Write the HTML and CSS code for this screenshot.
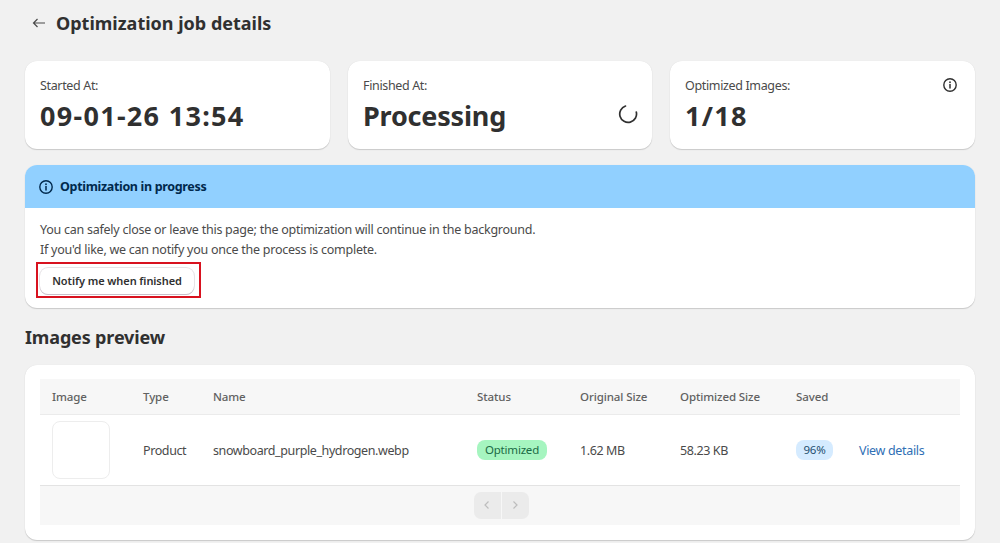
FILE: index.html
```html
<!DOCTYPE html>
<html lang="en">
<head>
<meta charset="utf-8">
<title>Optimization job details</title>
<link rel="stylesheet" href="styles.css">
</head>
<body>
<main class="page">
  <header class="title-bar">
    <svg class="back" viewBox="0 0 16 16" width="16" height="16"><path d="M14 8H2.5M6.5 4 2.5 8l4 4" fill="none" stroke="#4a4a4a" stroke-width="1.2"/></svg>
    <h1>Optimization job details</h1>
  </header>
  <section class="stats">
    <div class="card stat">
      <div class="stat-text"><div class="label">Started At:</div><div class="value num">09-01-26 13:54</div></div>
    </div>
    <div class="card stat">
      <div class="stat-text"><div class="label">Finished At:</div><div class="value">Processing</div></div>
      <svg class="spinner" viewBox="0 0 20 20" width="20" height="20"><path d="M7.5 2A8.4 8.4 0 1 0 18.3 8" fill="none" stroke="#303030" stroke-width="1.7" stroke-linecap="round"/></svg>
    </div>
    <div class="card stat">
      <div class="stat-text"><div class="label">Optimized Images:</div><div class="value num">1/18</div></div>
      <svg class="info" viewBox="0 0 16 16" width="16" height="16"><circle cx="8" cy="8" r="6.2" fill="none" stroke="#303030" stroke-width="1.4"/><path d="M8 7.4v3.6" stroke="#303030" stroke-width="1.5" stroke-linecap="round"/><circle cx="8" cy="5.2" r=".9" fill="#303030"/></svg>
    </div>
  </section>
  <section class="card banner">
    <div class="banner-head">
      <svg viewBox="0 0 16 16" width="16" height="16"><circle cx="8" cy="8" r="6.2" fill="none" stroke="#00294d" stroke-width="1.4"/><path d="M8 7.4v3.6" stroke="#00294d" stroke-width="1.5" stroke-linecap="round"/><circle cx="8" cy="5.2" r=".9" fill="#00294d"/></svg>
      <h2>Optimization in progress</h2>
    </div>
    <div class="banner-body">
      <p>You can safely close or leave this page; the optimization will continue in the background.<br>If you'd like, we can notify you once the process is complete.</p>
      <div class="btn-wrap">
        <button class="btn" type="button">Notify me when finished</button>
        <span class="highlight"></span>
      </div>
    </div>
  </section>
  <h2 class="section-title">Images preview</h2>
  <section class="card table-card">
    <table>
      <thead>
        <tr><th class="c-img">Image</th><th class="c-type">Type</th><th class="c-name">Name</th><th class="c-status">Status</th><th class="c-orig">Original Size</th><th class="c-opt">Optimized Size</th><th class="c-saved">Saved</th><th></th></tr>
      </thead>
      <tbody>
        <tr>
          <td><div class="thumb"></div></td>
          <td class="t-cell">Product</td>
          <td class="t-cell">snowboard_purple_hydrogen.webp</td>
          <td><span class="badge green">Optimized</span></td>
          <td class="t-cell">1.62 MB</td>
          <td class="t-cell">58.23 KB</td>
          <td><span class="badge blue">96%</span></td>
          <td class="t-cell"><a class="link" href="#">View details</a></td>
        </tr>
      </tbody>
    </table>
    <div class="pager-bar">
      <div class="pager">
        <span class="pg pg-l"><svg viewBox="0 0 12 12" width="12" height="12"><path d="M7.5 2.5 4 6l3.5 3.5" fill="none" stroke="#bdbdbd" stroke-width="1.2"/></svg></span>
        <span class="pg pg-r"><svg viewBox="0 0 12 12" width="12" height="12"><path d="M4.5 2.5 8 6 4.5 9.5" fill="none" stroke="#bdbdbd" stroke-width="1.2"/></svg></span>
      </div>
    </div>
  </section>
</main>
</body>
</html>
```
FILE: styles.css
```css
* { box-sizing: border-box; }
html, body { margin: 0; height: 543px; overflow: hidden; }
body { background: #f1f1f1; color: #303030; font-family: "Noto Sans", "Open Sans", sans-serif; font-size: 12.5px; line-height: 20px; }
.page { padding: 0 25px; }
.title-bar { display: flex; align-items: center; gap: 9px; height: 46px; padding-left: 6px; }
.title-bar h1 { margin: 0; font-size: 18px; font-weight: 700; letter-spacing: 0; color: #303030; }
.card { background: #fff; border-radius: 12px; box-shadow: 0 1px 1px rgba(0,0,0,.16), 0 0 1px rgba(0,0,0,.1); }
.stats { display: grid; grid-template-columns: 305px 304px 305px; gap: 18px; margin-top: 15px; }
.stat { height: 88px; padding: 15px; display: flex; justify-content: space-between; }
.label { font-size: 12.5px; letter-spacing: -.35px; color: #4a4a4a; height: 20px; }
.value { font-size: 27px; line-height: 40px; font-weight: 700; letter-spacing: -.2px; color: #303030; }
.num { letter-spacing: 1.3px; }
.spinner { align-self: flex-end; margin: 0 -1px 10px 0; }
.info { margin: 1px 2px 0 0; }
.banner { margin-top: 16px; height: 143px; overflow: hidden; }
.banner-head { background: #91d0ff; height: 43px; display: flex; align-items: center; gap: 6px; padding-left: 13px; }
.banner-head h2 { margin: 0; font-size: 12.5px; font-weight: 700; letter-spacing: -.33px; color: #00294d; }
.banner-body { padding: 12px 15px; }
.banner-body p { margin: 0; letter-spacing: -.25px; color: #4a4a4a; }
.btn-wrap { position: relative; margin-top: 8px; display: inline-block; }
.btn { display: block; width: 154px; height: 26px; border: 0; border-radius: 8px; background: #fff; color: #303030; font: 600 11px/20px "Noto Sans", sans-serif; letter-spacing: -.08px; box-shadow: 0 1px 0 #c9bfc9, 0 0 0 1px #e6e3e6; }
.highlight { position: absolute; left: -4px; top: -6px; width: 165px; height: 36px; border: 2px solid #d8121f; }
.section-title { margin: 17px 0 0; height: 40px; font-size: 18px; line-height: 24px; font-weight: 700; letter-spacing: -.15px; color: #303030; }
.table-card { height: 175px; padding: 14px 15px 15px; }
table { width: 920px; border-collapse: collapse; table-layout: fixed; }
th { height: 35px; background: #f7f7f7; padding: 2px 0 0 12px; text-align: left; font-size: 11.5px; font-weight: 500; letter-spacing: -.1px; color: #616161; border-bottom: 1px solid #ebebeb; }
td { height: 71px; padding: 0 0 0 12px; font-size: 12.5px; letter-spacing: -.4px; color: #4a4a4a; border-bottom: 1px solid #e3e3e3; }
.t-cell { padding-top: 2px; }
.c-img { width: 91px; } .c-type { width: 70px; } .c-name { width: 264px; } .c-status { width: 103px; } .c-orig { width: 100px; } .c-opt { width: 116px; } .c-saved { width: 63px; }
.thumb { width: 58px; height: 58px; border: 1px solid #ededed; border-radius: 8px; background: #fff; }
.badge { display: inline-block; height: 20px; line-height: 20px; border-radius: 8px; font-size: 11.5px; letter-spacing: -.2px; text-align: center; font-weight: 400; }
.green { width: 70px; background: #a6f5c0; color: #1a6a45; }
.blue { width: 37px; background: #d5ebff; color: #1f4f70; }
.link { color: #2f6fb5; text-decoration: none; letter-spacing: -.33px; }
.pager-bar { height: 39px; background: #f7f7f7; padding: 6px 0 0 2px; display: flex; justify-content: center; }
.pager { display: flex; gap: 1px; height: 27px; }
.pg { width: 27px; display: flex; align-items: center; justify-content: center; background: #ebebeb; }
.pg-l { border-radius: 7px 0 0 7px; }
.pg-r { border-radius: 0 7px 7px 0; }
```
